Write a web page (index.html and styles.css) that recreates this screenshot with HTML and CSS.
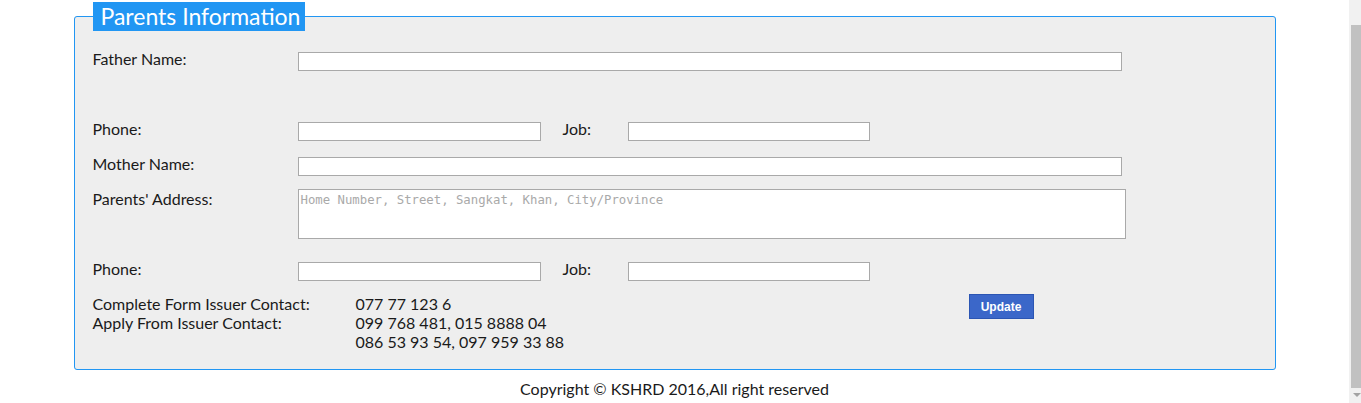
FILE: index.html
```html
<!DOCTYPE html>
<html>
<head>
<meta charset="utf-8">
<link rel="stylesheet" href="styles.css">
</head>
<body>
<div class="page">
  <fieldset class="panel">
    <legend class="panel-title">Parents Information</legend>
    <div class="row row-father">
      <label class="lbl">Father Name:</label>
      <input class="field field-wide" type="text">
    </div>
    <div class="row row-phone">
      <label class="lbl">Phone:</label>
      <input class="field field-half" type="text">
      <label class="lbl-job">Job:</label>
      <input class="field field-half" type="text">
    </div>
    <div class="row row-mother">
      <label class="lbl">Mother Name:</label>
      <input class="field field-wide" type="text">
    </div>
    <div class="row row-address">
      <label class="lbl lbl-address">Parents' Address:</label>
      <textarea class="area" placeholder="Home Number, Street, Sangkat, Khan, City/Province"></textarea>
    </div>
    <div class="row row-phone2">
      <label class="lbl">Phone:</label>
      <input class="field field-half" type="text">
      <label class="lbl-job">Job:</label>
      <input class="field field-half" type="text">
    </div>
    <div class="contacts">
      <div class="contact-grid">
        <span>Complete Form Issuer Contact:</span>
        <span>077 77 123 6</span>
        <span>Apply From Issuer Contact:</span>
        <span>099 768 481, 015 8888 04</span>
        <span></span>
        <span>086 53 93 54, 097 959 33 88</span>
      </div>
      <button class="btn-update" type="button">Update</button>
    </div>
  </fieldset>
  <footer class="footer">Copyright © KSHRD 2016,All right reserved</footer>
</div>
<div class="scrollbar">
  <div class="thumb"></div>
  <div class="arrow"></div>
</div>
</body>
</html>
```

FILE: styles.css
```css
html, body {
  margin: 0;
  padding: 0;
  background: #ffffff;
}
body {
  font-family: Lato, "Open Sans", sans-serif;
  font-size: 16px;
  color: #1a1a1a;
  overflow: hidden;
}
.page {
  width: 1349px;
  padding-top: 2px;
}
.panel {
  box-sizing: border-box;
  width: 1202px;
  margin: 0 auto;
  background: #eeeeee;
  border: 1px solid #2196f3;
  border-radius: 3px;
  padding: 21px 18px 18px 18px;
}
.panel-title {
  background: #2196f3;
  color: #ffffff;
  font-size: 23px;
  line-height: 29px;
  padding: 0 5px 0 8px;
  margin-left: 0;
}
.row {
  display: flex;
  align-items: flex-start;
}
.lbl {
  width: 205px;
  flex: none;
  line-height: 14px;
}
.lbl-address {
  margin-top: 3px;
}
.lbl-job {
  width: 65px;
  margin-left: 22px;
  flex: none;
  line-height: 14px;
}
.field {
  box-sizing: border-box;
  height: 19px;
  border: 1px solid #a9a9a9;
  background: #ffffff;
  margin: 0;
  padding: 0 2px;
  font: inherit;
}
.field-wide { width: 824px; }
.field-half { width: 243px; }
.row .field-half:last-child { width: 242px; }
.area {
  box-sizing: border-box;
  width: 828px;
  height: 50px;
  border: 1px solid #a9a9a9;
  background: #ffffff;
  margin: 0;
  padding: 3px 2px;
  resize: none;
  font-family: "DejaVu Sans Mono", monospace;
  font-size: 12.3px;
  line-height: 14px;
}
.area::placeholder { color: #a9a9a9; }
.row-father { margin-bottom: 51px; }
.row-phone { margin-bottom: 16px; }
.row-mother { margin-bottom: 13px; }
.row-address { margin-bottom: 23px; }
.row-phone2 { margin-bottom: 13px; }
.contacts {
  display: flex;
  align-items: flex-start;
}
.contact-grid {
  display: grid;
  grid-template-columns: 263px auto;
  line-height: 19px;
  width: 876px;
  flex: none;
}
.btn-update {
  margin-top: 0;
  width: 65px;
  height: 25px;
  background: #3b67c9;
  border: 1px solid #2b55b3;
  color: #ffffff;
  font-family: "Liberation Sans", Arial, sans-serif;
  font-weight: bold;
  font-size: 12px;
  padding: 0;
}
.footer {
  text-align: center;
  margin-top: 10px;
  line-height: 18px;
}
.scrollbar {
  position: fixed;
  top: 0;
  right: 0;
  width: 12px;
  height: 100%;
  background: #f1f1f1;
}
.thumb {
  position: absolute;
  left: 2px;
  right: 0;
  top: 25px;
  height: 363px;
  background: #c1c1c1;
}
.arrow {
  position: absolute;
  left: 4px;
  bottom: 6px;
  width: 0;
  height: 0;
  border-left: 4px solid transparent;
  border-right: 4px solid transparent;
  border-top: 4px solid #a3a3a3;
}
```
